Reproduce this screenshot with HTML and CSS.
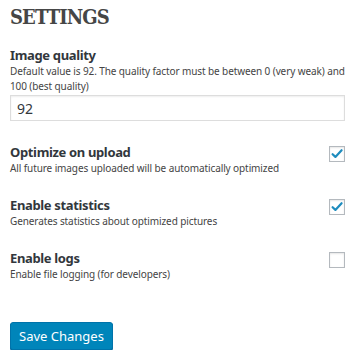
FILE: index.html
```html
<!DOCTYPE html>
<html>
<head>
<meta charset="utf-8">
<link rel="stylesheet" href="styles.css">
</head>
<body>
<div class="page">
  <h1 class="title">SETTINGS</h1>
  <div class="field">
    <div class="label">Image quality</div>
    <p class="desc">Default value is 92. The quality factor must be between 0 (very weak) and 100 (best quality)</p>
    <input class="text-input" type="text" value="92">
  </div>
  <div class="option">
    <div class="option-text">
      <div class="label">Optimize on upload</div>
      <p class="desc">All future images uploaded will be automatically optimized</p>
    </div>
    <span class="check">
      <svg viewBox="0 0 16 16" width="16" height="16"><path d="M3.6 8.2 L6.4 10.9 L12.6 4.2" fill="none" stroke="#1e8cbe" stroke-width="2.2" stroke-linecap="round" stroke-linejoin="round"/></svg>
    </span>
  </div>
  <div class="option">
    <div class="option-text">
      <div class="label">Enable statistics</div>
      <p class="desc">Generates statistics about optimized pictures</p>
    </div>
    <span class="check">
      <svg viewBox="0 0 16 16" width="16" height="16"><path d="M3.6 8.2 L6.4 10.9 L12.6 4.2" fill="none" stroke="#1e8cbe" stroke-width="2.2" stroke-linecap="round" stroke-linejoin="round"/></svg>
    </span>
  </div>
  <div class="option">
    <div class="option-text">
      <div class="label">Enable logs</div>
      <p class="desc">Enable file logging (for developers)</p>
    </div>
    <span class="check"></span>
  </div>
  <button class="btn" type="button">Save Changes</button>
</div>
</body>
</html>
```

FILE: styles.css
```css
html, body {
  margin: 0;
  padding: 0;
  background: #fff;
}
.page {
  padding: 5px 19px 0 10px;
  font-family: "Noto Sans", "Open Sans", sans-serif;
  color: #32373c;
}
.title {
  margin: 0;
  font-family: "DejaVu Serif", serif;
  font-stretch: condensed;
  font-weight: bold;
  font-size: 20px;
  line-height: 24px;
  color: #464646;
  letter-spacing: -0.9px;
}
.field {
  margin-top: 18px;
}
.label {
  font-weight: bold;
  font-size: 13px;
  line-height: 17px;
  letter-spacing: -0.35px;
  color: #32373c;
}
.desc {
  margin: 0;
  font-size: 10px;
  line-height: 15px;
  letter-spacing: -0.1px;
  color: #444;
}
.text-input {
  display: block;
  box-sizing: border-box;
  width: 100%;
  height: 26px;
  margin-top: 1px;
  padding: 0 6px;
  border: 1px solid #ddd;
  box-shadow: inset 0 1px 2px rgba(0,0,0,0.07);
  font-family: "Noto Sans", "Open Sans", sans-serif;
  font-size: 14px;
  color: #32373c;
  outline: none;
}
.option {
  display: flex;
  justify-content: space-between;
  align-items: flex-start;
  margin-top: 23px;
}
.option + .option {
  margin-top: 21px;
}
.check {
  box-sizing: border-box;
  width: 16px;
  height: 16px;
  margin-top: 2px;
  border: 1px solid #b4b9be;
  background: #fff;
  display: flex;
  align-items: center;
  justify-content: center;
  box-shadow: inset 0 1px 2px rgba(0,0,0,0.1);
}
.check svg {
  display: block;
  flex: none;
}
.btn {
  display: block;
  margin-top: 40px;
  height: 28px;
  padding: 0 8px;
  background: #0085ba;
  border: 1px solid #0073aa;
  border-radius: 3px;
  box-shadow: 0 1px 0 #006799;
  color: #fff;
  font-family: "Noto Sans", "Open Sans", sans-serif;
  font-size: 13px;
}
```
